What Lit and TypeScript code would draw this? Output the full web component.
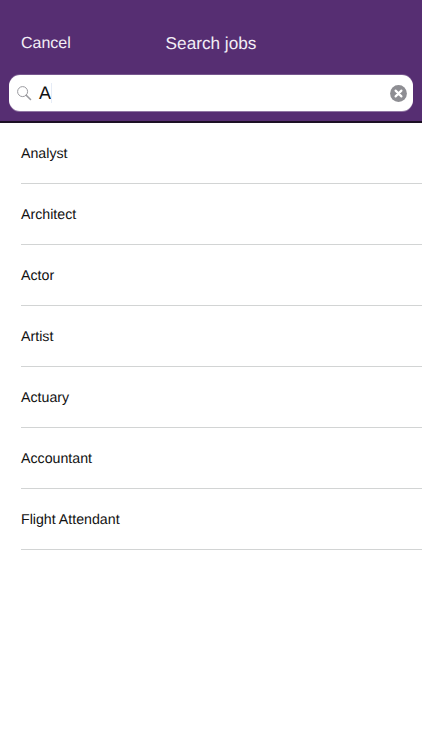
import { LitElement, html, css } from "lit";
import { customElement } from "lit/decorators.js";

const JOBS = ["Analyst", "Architect", "Actor", "Artist", "Actuary", "Accountant", "Flight Attendant"];

@customElement("app-root")
export class AppRoot extends LitElement {
  static styles = css`
    :host {
      display: block;
      width: 422px;
      height: 750px;
      background: #fff;
      font-family: "Liberation Sans", Arial, sans-serif;
      text-rendering: geometricPrecision;
      overflow: hidden;
    }
    .header {
      height: 123px;
      box-sizing: border-box;
      background: #562e72;
      border-bottom: 2px solid #1c1024;
      padding: 0 9px;
      display: flex;
      flex-direction: column;
    }
    .nav {
      height: 75px;
      flex: none;
      position: relative;
      display: flex;
      align-items: center;
      justify-content: center;
      padding-top: 11px;
      box-sizing: border-box;
    }
    .cancel {
      position: absolute;
      left: 12px;
      top: 34px;
      font-size: 16px;
      line-height: 20px;
      color: #f3eef6;
    }
    .title {
      font-size: 17.2px;
      line-height: 20px;
      color: #f3eef6;
    }
    .search {
      height: 36px;
      box-sizing: border-box;
      background: #fff;
      border-radius: 11px;
      display: flex;
      align-items: center;
      padding: 0 6px 0 7px;
      box-shadow: 0 1px 0 rgba(255, 255, 255, 0.35), 0 -1px 0 rgba(255, 255, 255, 0.2);
    }
    .search svg { flex: none; display: block; }
    .q {
      margin-left: 7px;
      font-size: 18px;
      color: #111;
      flex: 1;
      display: flex;
      align-items: center;
    }
    .caret {
      width: 1px;
      height: 20px;
      background: #e6ecf6;
    }
    .list { margin: 0; padding: 0 0 0 21px; list-style: none; }
    .list li {
      height: 61px;
      box-sizing: border-box;
      border-bottom: 1px solid #d2d4d4;
      padding-top: 2px;
      display: flex;
      align-items: center;
      font-size: 14.2px;
      color: #111;
    }
  `;

  render() {
    return html`
      <div class="header">
        <div class="nav">
          <span class="cancel">Cancel</span>
          <span class="title">Search jobs</span>
        </div>
        <div class="search">
          <svg width="16" height="16" viewBox="0 0 16 16" fill="none" stroke="#9a9a9f">
            <circle cx="6.6" cy="6.6" r="5" stroke-width="1" />
            <path d="M10.2 10.2l4.3 4.3" stroke-width="1.6" stroke-linecap="round" />
          </svg>
          <span class="q">A<span class="caret"></span></span>
          <svg width="17" height="17" viewBox="0 0 17 17">
            <circle cx="8.5" cy="8.5" r="8.4" fill="#8e8e93" />
            <path d="M5.6 5.6l5.8 5.8M11.4 5.6l-5.8 5.8" stroke="#fff" stroke-width="2.2" stroke-linecap="round" />
          </svg>
        </div>
      </div>
      <ul class="list">
        ${JOBS.map((j) => html`<li>${j}</li>`)}
      </ul>
    `;
  }
}
